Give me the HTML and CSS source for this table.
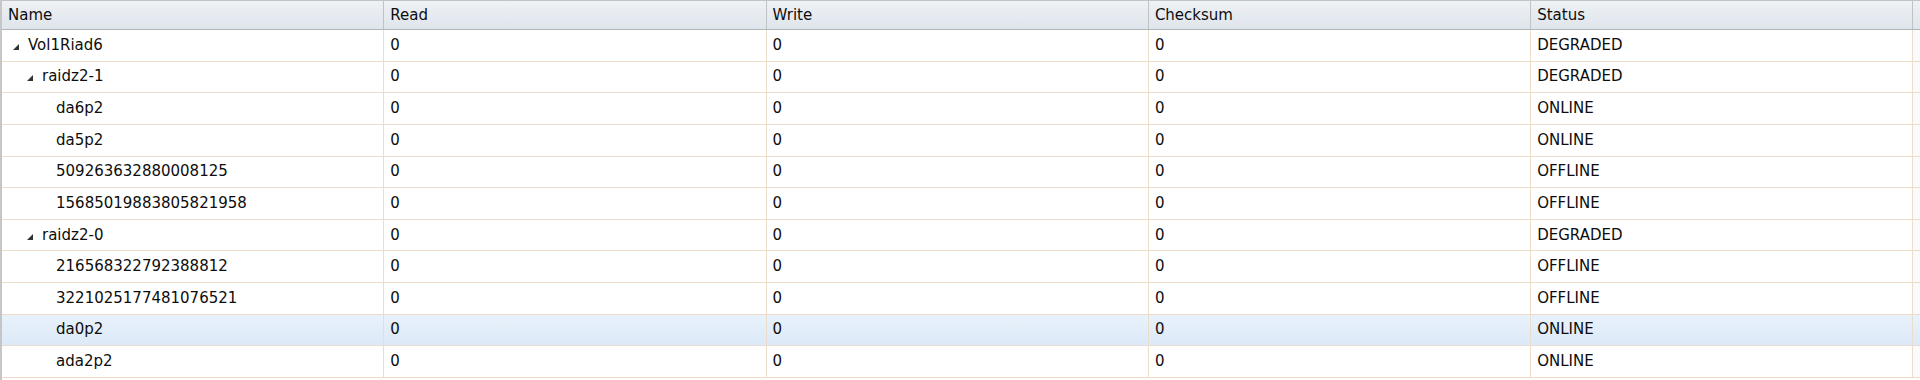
FILE: index.html
```html
<!DOCTYPE html>
<html>
<head>
<meta charset="utf-8">
<link rel="stylesheet" href="styles.css">
</head>
<body>
<div class="grid">
  <div class="row head">
    <div class="cell">Name</div>
    <div class="cell">Read</div>
    <div class="cell">Write</div>
    <div class="cell">Checksum</div>
    <div class="cell">Status</div>
    <div class="filler"></div>
  </div>
  <div class="row">
    <div class="cell name l0"><svg class="tri" width="6" height="6" viewBox="0 0 6 6"><polygon points="6,0 6,6 0,6"/></svg>Vol1Riad6</div>
    <div class="cell">0</div><div class="cell">0</div><div class="cell">0</div><div class="cell">DEGRADED</div><div class="filler"></div>
  </div>
  <div class="row">
    <div class="cell name l1"><svg class="tri" width="6" height="6" viewBox="0 0 6 6"><polygon points="6,0 6,6 0,6"/></svg>raidz2-1</div>
    <div class="cell">0</div><div class="cell">0</div><div class="cell">0</div><div class="cell">DEGRADED</div><div class="filler"></div>
  </div>
  <div class="row">
    <div class="cell name l2">da6p2</div>
    <div class="cell">0</div><div class="cell">0</div><div class="cell">0</div><div class="cell">ONLINE</div><div class="filler"></div>
  </div>
  <div class="row">
    <div class="cell name l2">da5p2</div>
    <div class="cell">0</div><div class="cell">0</div><div class="cell">0</div><div class="cell">ONLINE</div><div class="filler"></div>
  </div>
  <div class="row">
    <div class="cell name l2">509263632880008125</div>
    <div class="cell">0</div><div class="cell">0</div><div class="cell">0</div><div class="cell">OFFLINE</div><div class="filler"></div>
  </div>
  <div class="row">
    <div class="cell name l2">15685019883805821958</div>
    <div class="cell">0</div><div class="cell">0</div><div class="cell">0</div><div class="cell">OFFLINE</div><div class="filler"></div>
  </div>
  <div class="row">
    <div class="cell name l1"><svg class="tri" width="6" height="6" viewBox="0 0 6 6"><polygon points="6,0 6,6 0,6"/></svg>raidz2-0</div>
    <div class="cell">0</div><div class="cell">0</div><div class="cell">0</div><div class="cell">DEGRADED</div><div class="filler"></div>
  </div>
  <div class="row">
    <div class="cell name l2">216568322792388812</div>
    <div class="cell">0</div><div class="cell">0</div><div class="cell">0</div><div class="cell">OFFLINE</div><div class="filler"></div>
  </div>
  <div class="row">
    <div class="cell name l2">3221025177481076521</div>
    <div class="cell">0</div><div class="cell">0</div><div class="cell">0</div><div class="cell">OFFLINE</div><div class="filler"></div>
  </div>
  <div class="row selected">
    <div class="cell name l2">da0p2</div>
    <div class="cell">0</div><div class="cell">0</div><div class="cell">0</div><div class="cell">ONLINE</div><div class="filler"></div>
  </div>
  <div class="row">
    <div class="cell name l2">ada2p2</div>
    <div class="cell">0</div><div class="cell">0</div><div class="cell">0</div><div class="cell">ONLINE</div><div class="filler"></div>
  </div>
</div>
</body>
</html>
```

FILE: styles.css
```css
html, body {
  margin: 0;
  padding: 0;
  background: #ffffff;
}

body {
  font-family: "DejaVu Sans", Verdana, sans-serif;
  font-size: 15px;
  color: #0d0d0d;
  overflow: hidden;
}

.grid {
  width: 1920px;
  height: 380px;
  box-sizing: border-box;
  border-left: 2px solid #c6c6c6;
  display: flex;
  flex-direction: column;
  overflow: hidden;
}

.row {
  display: grid;
  grid-template-columns: repeat(5, 382.3px) 1fr;
  height: 31.64px;
  box-sizing: border-box;
  border-bottom: 1px solid #ecdcca;
  flex: none;
}

.cell {
  display: flex;
  align-items: center;
  padding: 0 0 1px 6px;
  box-sizing: border-box;
  border-right: 1px solid #ecdcca;
  white-space: nowrap;
  overflow: hidden;
}

.filler {
  background: #fafafa;
}

.head {
  height: 30px;
  border-top: 1px solid #c4c4c4;
  border-bottom: 1px solid #b4b4b4;
  background: linear-gradient(#eef1f5, #dfe5ec);
}

.head .cell {
  border-right: 1px solid #bfc2c6;
  padding: 0 0 0 6px;
}

.head .filler {
  background: transparent;
}

.selected {
  background: linear-gradient(#e9f2fc, #dce9f7);
  border-bottom-color: #e6dcd2;
}

.selected .filler {
  background: transparent;
}

.tri {
  fill: #333333;
  flex: none;
  margin-right: 9px;
  margin-top: 4px;
}

.name.l0 {
  padding-left: 11px;
}

.name.l1 {
  padding-left: 25px;
}

.name.l2 {
  padding-left: 54px;
}
```
